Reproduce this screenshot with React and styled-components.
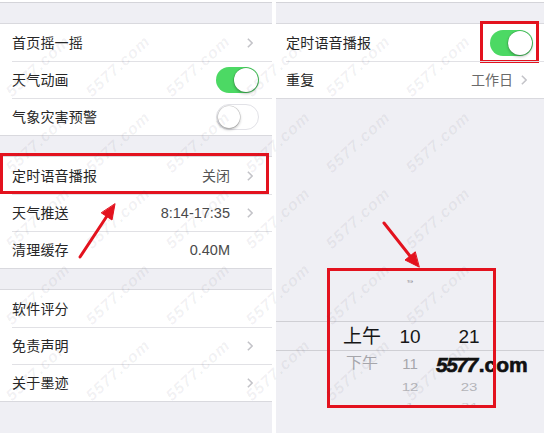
import React from "react";
import styled, { createGlobalStyle } from "styled-components";

const GlobalStyle = createGlobalStyle`
  html, body { margin: 0; padding: 0; background: #fff; }
  body {
    font-family: "Liberation Sans", "Noto Sans CJK SC", sans-serif;
    width: 547px; height: 433px; overflow: hidden;
  }
`;

const Page = styled.div`
  position: relative;
  width: 547px;
  height: 433px;
  display: flex;
  gap: 4px;
  background: #fff;
  overflow: hidden;
`;

const Panel = styled.div`
  width: ${(p) => p.$w}px;
  height: 425px;
  margin-top: 2px;
  border-top: 1px solid #d4d4d9;
  background: #efeff4;
  padding-top: 20px;
  display: flex;
  flex-direction: column;
  position: relative;
  overflow: hidden;
`;

const Group = styled.div`
  background: #fff;
  border-top: 1px solid #d9d9de;
  border-bottom: 1px solid #d9d9de;
  margin-bottom: ${(p) => p.$gap || 0}px;
`;

const Row = styled.div`
  position: relative;
  padding-left: ${(p) => p.$pl}px;
`;

const RowInner = styled.div`
  height: 37px;
  box-sizing: border-box;
  display: flex;
  align-items: center;
  padding-right: ${(p) => p.$pr}px;
  border-top: ${(p) => (p.$first ? "none" : "1px solid #e1e1e5")};
`;

const Label = styled.span`
  flex: 1;
  font-size: 14px;
  line-height: 18px;
  color: #262626;
  letter-spacing: 0.2px;
`;

const Value = styled.span`
  font-size: ${(p) => (p.$cjk ? 14 : 14.5)}px;
  line-height: 18px;
  color: ${(p) => p.$color || "#4a4a4a"};
`;

const ChevronBox = styled.span`
  display: flex;
  width: 6px;
  margin-left: ${(p) => p.$gap}px;
  margin-right: 6px;
  visibility: ${(p) => (p.$hidden ? "hidden" : "visible")};
`;

const Chevron = ({ gap = 17, hidden }) => (
  <ChevronBox $gap={gap} $hidden={hidden}>
    <svg width="7" height="12" viewBox="0 0 7 12">
      <path d="M1 1l5 5-5 5" fill="none" stroke="#c3c3c8" strokeWidth="1.8" />
    </svg>
  </ChevronBox>
);

const ToggleTrack = styled.div`
  position: relative;
  width: 43px;
  height: 26px;
  box-sizing: border-box;
  border-radius: 13px;
  display: flex;
  align-items: center;
  justify-content: ${(p) => (p.$on ? "flex-end" : "flex-start")};
  padding: 1px;
  background: ${(p) => (p.$on ? "#4cd964" : "#fff")};
  border: ${(p) => (p.$on ? "none" : "1.5px solid #e2e2e7")};
`;

const Knob = styled.span`
  width: ${(p) => (p.$on ? 24 : 22)}px;
  height: ${(p) => (p.$on ? 24 : 22)}px;
  border-radius: 50%;
  background: #fff;
  box-shadow: 0 0 0 0.5px rgba(0, 0, 0, 0.2), 0 1.5px 3px rgba(0, 0, 0, 0.3);
`;

const Frame = styled.div`
  position: absolute;
  left: ${(p) => p.$l}px;
  top: ${(p) => p.$t}px;
  width: ${(p) => p.$w}px;
  height: ${(p) => p.$h}px;
  box-sizing: border-box;
  border: 3px solid #e3121e;
  pointer-events: none;
`;

const Toggle = ({ on, children }) => (
  <ToggleTrack $on={on}>
    <Knob $on={on} />
    {children}
  </ToggleTrack>
);

/* Picker */
const Picker = styled.div`
  position: relative;
  margin-top: ${(p) => p.$mt}px;
`;

const PickerRow = styled.div`
  display: grid;
  grid-template-columns: 50px 46px 72px;
  padding-left: 61px;
  height: ${(p) => p.$h}px;
  box-sizing: border-box;
  align-items: center;
  border-top: ${(p) => (p.$sel ? "1px solid #cfcfd4" : "none")};
  border-bottom: ${(p) => (p.$sel ? "1px solid #cfcfd4" : "none")};
`;

const Spacer = styled.div`
  height: ${(p) => p.$h}px;
`;

const Cell = styled.span`
  text-align: center;
  font-size: ${(p) => p.$fs}px;
  line-height: ${(p) => p.$fs + 2}px;
  color: ${(p) => p.$c};
  transform: scaleY(${(p) => p.$sy || 1});
`;

const Logo = styled.div`
  position: absolute;
  left: 160px;
  top: 84px;
  font-family: "Liberation Sans", sans-serif;
  font-weight: 900;
  font-size: 21px;
  line-height: 22px;
  color: #111;
  white-space: nowrap;
  pointer-events: none;
  -webkit-text-stroke: 0.6px #111;
`;

const LogoDigits = styled.span`
  font-style: italic;
  letter-spacing: -1.5px;
  margin-right: 2px;
`;

const Overlay = styled.svg`
  position: absolute;
  left: 0;
  top: 0;
  pointer-events: none;
`;

const Watermarks = styled.div`
  position: absolute;
  inset: 0;
  pointer-events: none;
  overflow: hidden;
`;

const Mark = styled.span`
  position: absolute;
  font-family: "Liberation Sans", sans-serif;
  font-weight: bold;
  font-style: italic;
  font-size: 16px;
  line-height: 16px;
  letter-spacing: 1px;
  color: rgba(60, 60, 80, 0.07);
  transform-origin: 0 100%;
  transform: rotate(-43deg);
  white-space: nowrap;
`;

const marks = [];
for (let i = 0; i < 7; i++) {
  for (let j = 0; j < 5; j++) {
    const x = 14 + 80 * i;
    const y = 84 + 76 * j;
    if (x + 62 < 545 && y + 16 < 431 && y - 50 > 0) {
      marks.push({ x, y, k: `${i}-${j}` });
    }
  }
}

const leftGroups = [
  [
    { label: "首页摇一摇", chevron: true },
    { label: "天气动画", toggle: true, on: true },
    { label: "气象灾害预警", toggle: true, on: false },
  ],
  [
    { label: "定时语音播报", value: "关闭", cjk: true, color: "#555", chevron: true, framed: true },
    { label: "天气推送", value: "8:14-17:35", chevron: true },
    { label: "清理缓存", value: "0.40M", hiddenChevron: true },
  ],
  [
    { label: "软件评分" },
    { label: "免责声明", chevron: true },
    { label: "关于墨迹", chevron: true },
  ],
];

export default function App() {
  return (
    <>
      <GlobalStyle />
      <Page>
        <Panel $w={272}>
          {leftGroups.map((g, gi) => (
            <Group key={gi} $gap={gi < 2 ? 20 : 0}>
              {g.map((r, ri) => (
                <Row key={r.label} $pl={12}>
                  <RowInner $first={ri === 0} $pr={13}>
                    <Label>{r.label}</Label>
                    {r.value && (
                      <Value $cjk={r.cjk} $color={r.color}>
                        {r.value}
                      </Value>
                    )}
                    {r.chevron && <Chevron />}
                    {r.hiddenChevron && <Chevron hidden />}
                    {r.toggle && <Toggle on={r.on} />}
                  </RowInner>
                  {r.framed && <Frame $l={0} $t={-4} $w={269} $h={41} />}
                </Row>
              ))}
            </Group>
          ))}
        </Panel>

        <Panel $w={268}>
          <Group>
            <Row $pl={10}>
              <RowInner $first $pr={11}>
                <Label>定时语音播报</Label>
                <Toggle on>
                  <Frame $l={-10} $t={-9} $w={59} $h={42} />
                </Toggle>
              </RowInner>
            </Row>
            <Row $pl={10}>
              <RowInner $pr={11}>
                <Label>重复</Label>
                <Value $cjk $color="#6a6a6a">工作日</Value>
                <Chevron gap={8} />
              </RowInner>
            </Row>
          </Group>

          <Picker $mt={171}>
            <PickerRow $h={24}>
              <Cell />
              <Cell $fs={12} $c="#9a9aa2" $sy={0.25}>9</Cell>
              <Cell />
            </PickerRow>
            <Spacer $h={27} />
            <PickerRow $h={30} $sel>
              <Cell $fs={19} $c="#161616">上午</Cell>
              <Cell $fs={19} $c="#161616">10</Cell>
              <Cell $fs={19} $c="#161616">21</Cell>
            </PickerRow>
            <PickerRow $h={24}>
              <Cell $fs={16} $c="#a6a6ab" $sy={0.92}>下午</Cell>
              <Cell $fs={15} $c="#a6a6ab" $sy={0.92}>11</Cell>
              <Cell />
            </PickerRow>
            <PickerRow $h={22}>
              <Cell />
              <Cell $fs={15} $c="#b4b4b9" $sy={0.78}>12</Cell>
              <Cell $fs={15} $c="#b4b4b9" $sy={0.78}>23</Cell>
            </PickerRow>
            <PickerRow $h={12}>
              <Cell />
              <Cell $fs={14} $c="#c9c9ce" $sy={0.5}>1</Cell>
              <Cell $fs={14} $c="#c9c9ce" $sy={0.5}>24</Cell>
            </PickerRow>
            <Logo>
              <LogoDigits>5577</LogoDigits>.com
            </Logo>
            <Frame $l={51} $t={-2} $w={169} $h={140} />
          </Picker>
        </Panel>

        <Watermarks>
          {marks.map((m) => (
            <Mark key={m.k} style={{ left: m.x, top: m.y }}>
              5577.com
            </Mark>
          ))}
        </Watermarks>

        <Overlay width="547" height="433" viewBox="0 0 547 433">
          <g fill="#e3121e" stroke="#e3121e" strokeLinecap="round">
            <line x1="80" y1="257" x2="107" y2="216" strokeWidth="3" />
            <polygon points="115,204 112,220 101.5,213" strokeWidth="1" />
            <line x1="384" y1="223" x2="410" y2="256" strokeWidth="3" />
            <polygon points="419,267 405,260 415,252" strokeWidth="1" />
          </g>
        </Overlay>
      </Page>
    </>
  );
}
